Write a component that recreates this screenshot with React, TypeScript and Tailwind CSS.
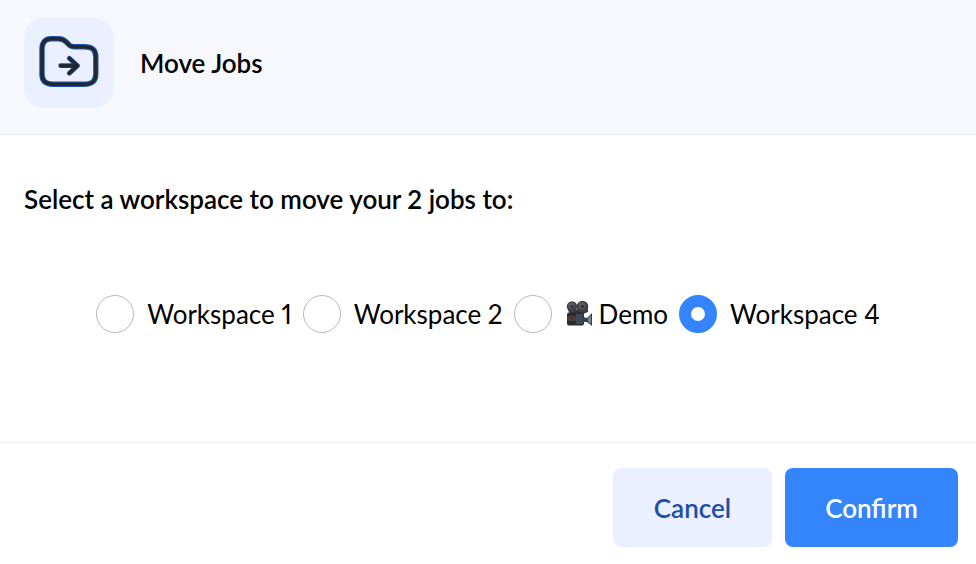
import { useState, type ReactNode } from 'react'

type Workspace = {
  id: string
  name: string
  icon?: ReactNode
}

const JOB_COUNT = 2

const WORKSPACES: Workspace[] = [
  { id: 'workspace-1', name: 'Workspace 1' },
  { id: 'workspace-2', name: 'Workspace 2' },
  { id: 'demo', name: 'Demo', icon: <MovieCameraIcon /> },
  { id: 'workspace-4', name: 'Workspace 4' },
]

function MoveFolderIcon() {
  const folder =
    'M3 13C3 6 6.5 2.7 12 2.7H19.5C23.5 2.7 25 3.6 27.5 6.2L30.3 9.2C31.5 10.4 32.5 10.8 35 10.8H45C53.5 10.8 56.8 13.8 56.8 21V38C56.8 45 53.5 48.2 45 48.2H14C6.5 48.2 3 45 3 38Z'
  const arrow = 'M21.7 29.7H38.5M30.3 22.3L38.5 29.7L30.3 37.2'

  return (
    <svg width="60" height="54" viewBox="0 0 60 54" fill="none" aria-hidden="true">
      <g strokeLinecap="round" strokeLinejoin="round">
        <path d={folder} stroke="#1d56b5" strokeWidth="5.4" />
        <path d={folder} stroke="#23272f" strokeWidth="3.4" />
        <path d={arrow} stroke="#1d4f9f" strokeWidth="4.8" />
        <path d={arrow} stroke="#23272f" strokeWidth="3.4" />
      </g>
    </svg>
  )
}

function MovieCameraIcon() {
  return (
    <svg width="28" height="28" viewBox="0 0 28 28" aria-hidden="true">
      <path d="M3 10L23 8.5V12L18 14H5Z" fill="#36373b" />
      <circle cx="7" cy="6.5" r="5.2" fill="#414145" />
      <circle cx="17.5" cy="6.5" r="5.8" fill="#414145" />
      <circle cx="6.5" cy="5.5" r="3" fill="#5b5b5f" />
      <circle cx="17" cy="5.5" r="3.4" fill="#5b5b5f" />
      <circle cx="7" cy="6.5" r="1.3" fill="#2a2a2d" />
      <circle cx="17.5" cy="6.5" r="1.4" fill="#2a2a2d" />
      <rect x="2" y="12.5" width="17" height="13" rx="2" fill="#292b30" />
      <rect x="2" y="16" width="9" height="5" rx="1" fill="#4b3d3b" />
      <rect x="11" y="14" width="7" height="10" fill="#3e4b57" />
      <path d="M18 17L22 18L27 13V26L22 22L18 22Z" fill="#35404a" />
      <path d="M23 18L26 15.5V24L23 21.5Z" fill="#708696" />
    </svg>
  )
}

type WorkspaceOptionProps = {
  workspace: Workspace
  checked: boolean
  onSelect: (id: string) => void
}

function WorkspaceOption({ workspace, checked, onSelect }: WorkspaceOptionProps) {
  return (
    <div className="flex items-center gap-[13px]">
      <input
        id={workspace.id}
        type="radio"
        name="workspace"
        value={workspace.id}
        checked={checked}
        onChange={() => onSelect(workspace.id)}
        className="size-[38px] shrink-0 appearance-none rounded-full border border-[#b8b9bd] bg-white checked:border-[12px] checked:border-[#3485fb] focus-visible:outline-2 focus-visible:outline-offset-2 focus-visible:outline-[#3485fb]"
      />
      <label htmlFor={workspace.id} className="flex items-center gap-1.5 whitespace-nowrap">
        {workspace.icon}
        {workspace.name}
      </label>
    </div>
  )
}

export default function App() {
  const [selected, setSelected] = useState('workspace-4')

  return (
    <main className="min-h-screen bg-white font-['Lato','Inter',sans-serif] text-[26px] leading-8 text-black proportional-nums">
      <header className="flex items-center gap-[26px] border-b border-[#e2e8f0] bg-[#f7f8fd] px-6 pt-[18px] pb-[26px]">
        <div className="flex size-[90px] items-center justify-center rounded-[20px] bg-[#eaf0ff]">
          <MoveFolderIcon />
        </div>
        <h1 className="font-semibold">Move Jobs</h1>
      </header>

      <form onSubmit={(event) => event.preventDefault()}>
        <fieldset className="px-6 pt-12 pb-[109px]">
          <legend className="float-left w-full font-semibold">
            Select a workspace to move your {JOB_COUNT} jobs to:
          </legend>
          <div className="clear-both flex flex-wrap items-center justify-center gap-[11px] pt-20">
            {WORKSPACES.map((workspace) => (
              <WorkspaceOption
                key={workspace.id}
                workspace={workspace}
                checked={selected === workspace.id}
                onSelect={setSelected}
              />
            ))}
          </div>
        </fieldset>

        <footer className="flex justify-end gap-[13px] border-t border-[#f1f2f4] px-[18px] pt-[25px] pb-4">
          <button
            type="button"
            className="h-[79px] w-[159px] rounded-lg bg-[#eaf0ff] font-semibold text-[#1d4fa8] hover:bg-[#dde7ff]"
          >
            Cancel
          </button>
          <button
            type="submit"
            className="h-[79px] w-[173px] rounded-lg bg-[#3485fb] font-semibold text-white hover:bg-[#1f74f0]"
          >
            Confirm
          </button>
        </footer>
      </form>
    </main>
  )
}
